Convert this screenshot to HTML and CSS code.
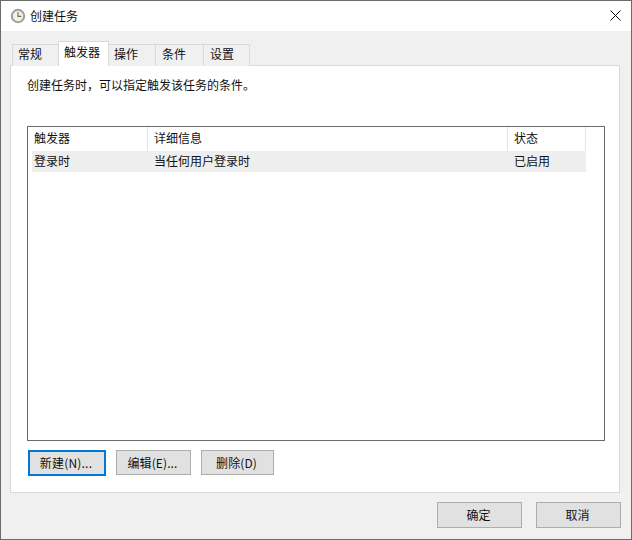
FILE: index.html
```html
<!DOCTYPE html>
<html lang="zh-CN">
<head>
<meta charset="utf-8">
<title>创建任务</title>
<link rel="stylesheet" href="styles.css">
</head>
<body>
<div class="window">
  <header class="titlebar">
    <svg class="app-icon" width="16" height="16" viewBox="0 0 16 16">
      <circle cx="8" cy="8" r="6.2" fill="#f6f1df" stroke="#9a9fa3" stroke-width="2"/>
      <path d="M8 4v4.4h3.4" fill="none" stroke="#6d6a5e" stroke-width="1.1"/>
    </svg>
    <span class="title">创建任务</span>
    <svg class="close" width="11" height="11" viewBox="0 0 11 11">
      <path d="M.5.5l10 10M10.5.5l-10 10" stroke="#111" stroke-width="1" fill="none"/>
    </svg>
  </header>
  <main class="body">
    <nav class="tabs">
      <span class="tab tab-w1">常规</span>
      <span class="tab tab-active">触发器</span>
      <span class="tab tab-w2">操作</span>
      <span class="tab tab-w3">条件</span>
      <span class="tab tab-w4">设置</span>
    </nav>
    <section class="panel">
      <p class="hint">创建任务时，可以指定触发该任务的条件。</p>
      <div class="list">
        <div class="row head">
          <span class="cell c1">触发器</span>
          <span class="cell c2">详细信息</span>
          <span class="cell c3">状态</span>
        </div>
        <div class="row selected">
          <span class="cell c1">登录时</span>
          <span class="cell c2">当任何用户登录时</span>
          <span class="cell c3">已启用</span>
        </div>
      </div>
      <div class="actions">
        <button class="btn btn-new">新建(N)...</button>
        <button class="btn btn-edit">编辑(E)...</button>
        <button class="btn btn-del">删除(D)</button>
      </div>
    </section>
    <footer class="footer">
      <button class="btn btn-big">确定</button>
      <button class="btn btn-big">取消</button>
    </footer>
  </main>
</div>
</body>
</html>
```
FILE: styles.css
```css
* { box-sizing: border-box; }
html, body { margin: 0; padding: 0; }
body {
  width: 632px;
  height: 540px;
  overflow: hidden;
  font-family: "Noto Sans CJK SC", "Liberation Sans", sans-serif;
  font-size: 12px;
  color: #111;
}
.window {
  width: 632px;
  height: 540px;
  border: 1px solid #6b6b6b;
  display: flex;
  flex-direction: column;
  background: #f0f0f0;
}
.titlebar {
  height: 30px;
  background: #fff;
  display: flex;
  align-items: center;
  padding: 0 10px 0 9px;
  flex: none;
}
.app-icon { margin-right: 4px; }
.title { flex: 1; line-height: 30px; padding-bottom: 1px; }
.close { margin-bottom: 1px; }
.body {
  flex: 1;
  display: flex;
  flex-direction: column;
  padding: 0 10px 0 9px;
}
.tabs {
  display: flex;
  align-items: flex-end;
  height: 35px;
  padding: 0 0 0 2px;
  position: relative;
  z-index: 1;
  margin-bottom: -1px;
}
.tab {
  height: 22px;
  border: 1px solid #d9d9d9;
  border-left: 0;
  border-bottom: 0;
  display: flex;
  align-items: center;
  padding-left: 5px;
  padding-bottom: 3px;
  background: #f0f0f0;
  line-height: 20px;
}
.tab-w1 { width: 47px; border-left: 1px solid #d9d9d9; }
.tab-active {
  width: 51px;
  height: 25px;
  background: #fff;
  padding-left: 5px;
  padding-bottom: 4px;
  margin-left: -1px;
  border-left: 1px solid #d9d9d9;
}
.tab-w2 { width: 47px; padding-left: 5px; }
.tab-w3 { width: 48px; padding-left: 6px; }
.tab-w4 { width: 46px; padding-left: 6px; }
.panel {
  width: 610px;
  height: 428px;
  background: #fff;
  border: 1px solid #d9d9d9;
  padding: 0 0 0 16px;
  display: flex;
  flex-direction: column;
}
.hint {
  margin: 0;
  height: 60px;
  padding-top: 10px;
  line-height: 18px;
}
.list {
  width: 578px;
  height: 315px;
  border: 1px solid #6b6b6b;
  padding-left: 4px;
  flex: none;
}
.row {
  display: flex;
  width: 554px;
  line-height: 21px;
}
.head { height: 24px; }
.head .cell { height: 24px; border-right: 1px solid #e5e5e5; line-height: 22px; }
.selected { height: 21px; background: #eeeeee; line-height: 19px; }
.cell { padding-left: 2px; flex: none; }
.c1 { width: 116px; }
.c2 { width: 360px; padding-left: 6px; }
.c3 { width: 78px; padding-left: 6px; }
.actions {
  display: flex;
  align-items: flex-start;
  padding: 9px 0 0 1px;
}
.btn {
  font: inherit;
  color: #111;
  height: 25px;
  background: #e1e1e1;
  border: 1px solid #adadad;
  padding: 0;
  line-height: 20px;
}
.btn-new { width: 78px; height: 26px; border: 2px solid #0078d7; letter-spacing: 0.2px; padding-right: 2px; }
.btn-edit { width: 75px; margin-left: 10px; padding-right: 2px; letter-spacing: 0.1px; }
.btn-del { width: 73px; margin-left: 10px; padding-right: 2px; letter-spacing: 0.1px; }
.footer {
  display: flex;
  justify-content: flex-end;
  gap: 14px;
  padding: 9px 0 0;
}
.btn-big { width: 85px; height: 26px; padding-right: 2px; }
```
